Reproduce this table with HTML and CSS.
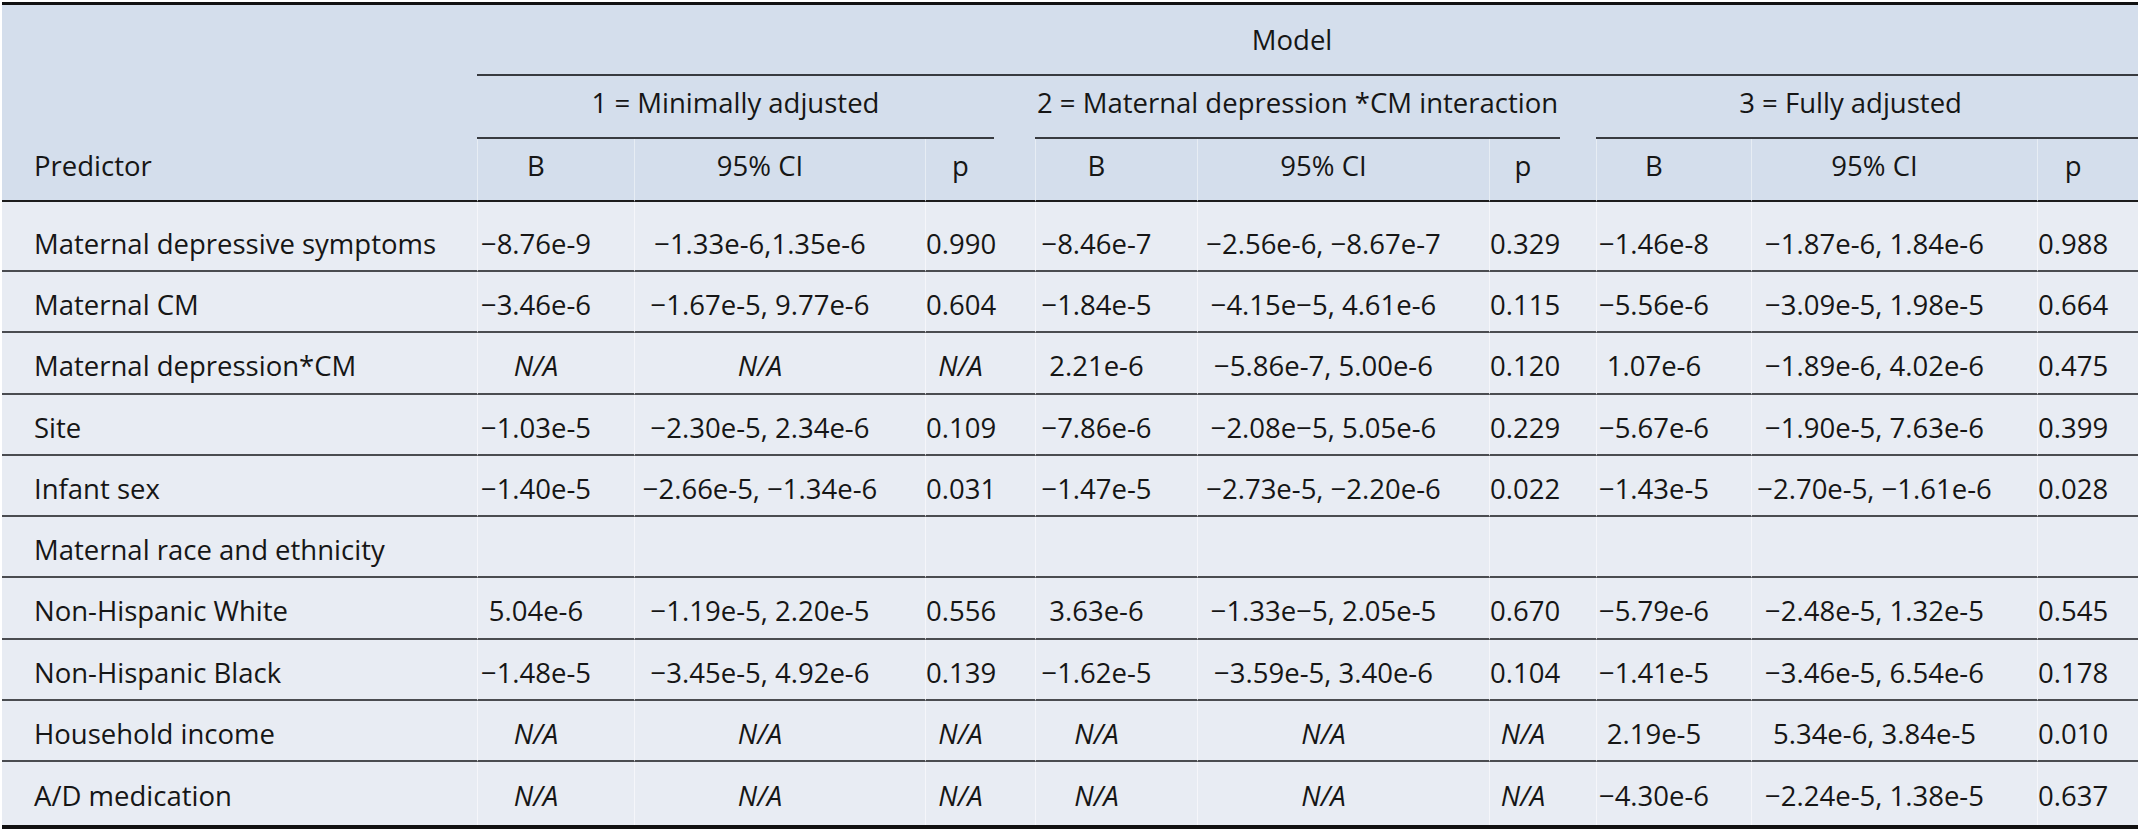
FILE: index.html
```html
<!DOCTYPE html>
<html lang="en">
<head>
<meta charset="utf-8">
<title>Model table</title>
<link rel="stylesheet" href="styles.css">
</head>
<body>
<table class="tbl">
  <colgroup>
    <col class="w0"><col class="wb1"><col class="wc1"><col class="wp1">
    <col class="wb2"><col class="wc2"><col class="wp2">
    <col class="wb3"><col class="wc3"><col class="wp3">
  </colgroup>
  <thead>
    <tr class="r1">
      <th class="pred" rowspan="3">Predictor</th>
      <th class="model" colspan="9">Model</th>
    </tr>
    <tr class="r2">
      <th class="grp g1" colspan="3">1 = Minimally adjusted</th>
      <th class="grp g2" colspan="3">2 = Maternal depression *CM interaction</th>
      <th class="grp g3" colspan="3">3 = Fully adjusted</th>
    </tr>
    <tr class="r3">
      <th>B</th><th>95% CI</th><th>p</th>
      <th>B</th><th>95% CI</th><th>p</th>
      <th>B</th><th>95% CI</th><th class="last">p</th>
    </tr>
  </thead>
  <tbody>
    <tr class="first">
      <td>Maternal depressive symptoms</td><td>−8.76e-9</td><td>−1.33e-6,1.35e-6</td><td>0.990</td>
      <td>−8.46e-7</td><td>−2.56e-6, −8.67e-7</td><td>0.329</td>
      <td>−1.46e-8</td><td>−1.87e-6, 1.84e-6</td><td>0.988</td>
    </tr>
    <tr>
      <td>Maternal CM</td><td>−3.46e-6</td><td>−1.67e-5, 9.77e-6</td><td>0.604</td>
      <td>−1.84e-5</td><td>−4.15e−5, 4.61e-6</td><td>0.115</td>
      <td>−5.56e-6</td><td>−3.09e-5, 1.98e-5</td><td>0.664</td>
    </tr>
    <tr>
      <td>Maternal depression*CM</td><td><i>N/A</i></td><td><i>N/A</i></td><td><i>N/A</i></td>
      <td>2.21e-6</td><td>−5.86e-7, 5.00e-6</td><td>0.120</td>
      <td>1.07e-6</td><td>−1.89e-6, 4.02e-6</td><td>0.475</td>
    </tr>
    <tr>
      <td>Site</td><td>−1.03e-5</td><td>−2.30e-5, 2.34e-6</td><td>0.109</td>
      <td>−7.86e-6</td><td>−2.08e−5, 5.05e-6</td><td>0.229</td>
      <td>−5.67e-6</td><td>−1.90e-5, 7.63e-6</td><td>0.399</td>
    </tr>
    <tr>
      <td>Infant sex</td><td>−1.40e-5</td><td>−2.66e-5, −1.34e-6</td><td>0.031</td>
      <td>−1.47e-5</td><td>−2.73e-5, −2.20e-6</td><td>0.022</td>
      <td>−1.43e-5</td><td>−2.70e-5, −1.61e-6</td><td>0.028</td>
    </tr>
    <tr>
      <td>Maternal race and ethnicity</td><td></td><td></td><td></td>
      <td></td><td></td><td></td>
      <td></td><td></td><td></td>
    </tr>
    <tr>
      <td>Non-Hispanic White</td><td>5.04e-6</td><td>−1.19e-5, 2.20e-5</td><td>0.556</td>
      <td>3.63e-6</td><td>−1.33e−5, 2.05e-5</td><td>0.670</td>
      <td>−5.79e-6</td><td>−2.48e-5, 1.32e-5</td><td>0.545</td>
    </tr>
    <tr>
      <td>Non-Hispanic Black</td><td>−1.48e-5</td><td>−3.45e-5, 4.92e-6</td><td>0.139</td>
      <td>−1.62e-5</td><td>−3.59e-5, 3.40e-6</td><td>0.104</td>
      <td>−1.41e-5</td><td>−3.46e-5, 6.54e-6</td><td>0.178</td>
    </tr>
    <tr>
      <td>Household income</td><td><i>N/A</i></td><td><i>N/A</i></td><td><i>N/A</i></td>
      <td><i>N/A</i></td><td><i>N/A</i></td><td><i>N/A</i></td>
      <td>2.19e-5</td><td>5.34e-6, 3.84e-5</td><td>0.010</td>
    </tr>
    <tr class="end">
      <td>A/D medication</td><td><i>N/A</i></td><td><i>N/A</i></td><td><i>N/A</i></td>
      <td><i>N/A</i></td><td><i>N/A</i></td><td><i>N/A</i></td>
      <td>−4.30e-6</td><td>−2.24e-5, 1.38e-5</td><td>0.637</td>
    </tr>
  </tbody>
</table>
</body>
</html>
```
FILE: styles.css
```css
html, body {
  margin: 0;
  padding: 0;
  background: #ffffff;
}

.tbl {
  margin: 2px;
  width: 2136px;
  table-layout: fixed;
  border-collapse: separate;
  border-spacing: 0;
  border-top: 3px solid #111111;
  border-bottom: 4px solid #111111;
  background: #d4deec;
  font-family: "Open Sans", "Noto Sans", sans-serif;
  font-size: 27.5px;
  line-height: 33px;
  color: #161616;
}

.w0 { width: 475px; }
.wb1 { width: 157px; }
.wc1 { width: 291px; }
.wp1 { width: 110px; }
.wb2 { width: 162px; }
.wc2 { width: 292px; }
.wp2 { width: 107px; }
.wb3 { width: 155px; }
.wc3 { width: 286px; }
.wp3 { width: 101px; }

.tbl th,
.tbl td {
  padding: 0 40px 0 0;
  text-align: center;
  font-weight: normal;
  white-space: nowrap;
}

.tbl i {
  font-style: italic;
}

/* header */
.r1 { height: 71px; }
.r2 { height: 63px; }
.r3 { height: 63px; }

.tbl th.pred {
  text-align: left;
  padding: 0 0 18px 32px;
  vertical-align: bottom;
  border-bottom: 2px solid #1c1c1c;
}

.tbl th.model {
  padding-right: 31px;
  vertical-align: middle;
  border-bottom: 2px solid #383b40;
}

.tbl th.grp {
  vertical-align: middle;
  padding-bottom: 10px;
  background-image: linear-gradient(#383b40, #383b40);
  background-repeat: no-repeat;
  background-position: left bottom;
}

.tbl th.g1 {
  padding-right: 41px;
  background-size: calc(100% - 41px) 2px;
}

.tbl th.g2 {
  padding-right: 36px;
  background-size: calc(100% - 36px) 2px;
}

.tbl th.g3 {
  padding-right: 33px;
  background-size: 100% 2px;
}

.r3 th {
  vertical-align: middle;
  padding-bottom: 8px;
  border-bottom: 2px solid #1c1c1c;
  border-left: 1px solid rgba(255, 255, 255, 0.45);
}

.tbl .r3 th.last,
.tbl tbody td:last-child {
  padding-right: 30px;
}

/* body */
.tbl tbody tr { height: 61.25px; }
.tbl tbody tr.first { height: 70px; }
.tbl tbody tr.end { height: 63px; }

.tbl tbody td {
  background: #e8ecf3;
  vertical-align: middle;
  padding-top: 6px;
  border-bottom: 2px solid #4a4c50;
  border-left: 1px solid rgba(255, 255, 255, 0.55);
}

.tbl tbody td:first-child {
  text-align: left;
  padding-left: 32px;
  border-left: none;
}

.tbl tbody tr.first td {
  padding-top: 14px;
}

.tbl tbody tr.end td {
  padding-top: 3px;
  border-bottom: none;
}
```
